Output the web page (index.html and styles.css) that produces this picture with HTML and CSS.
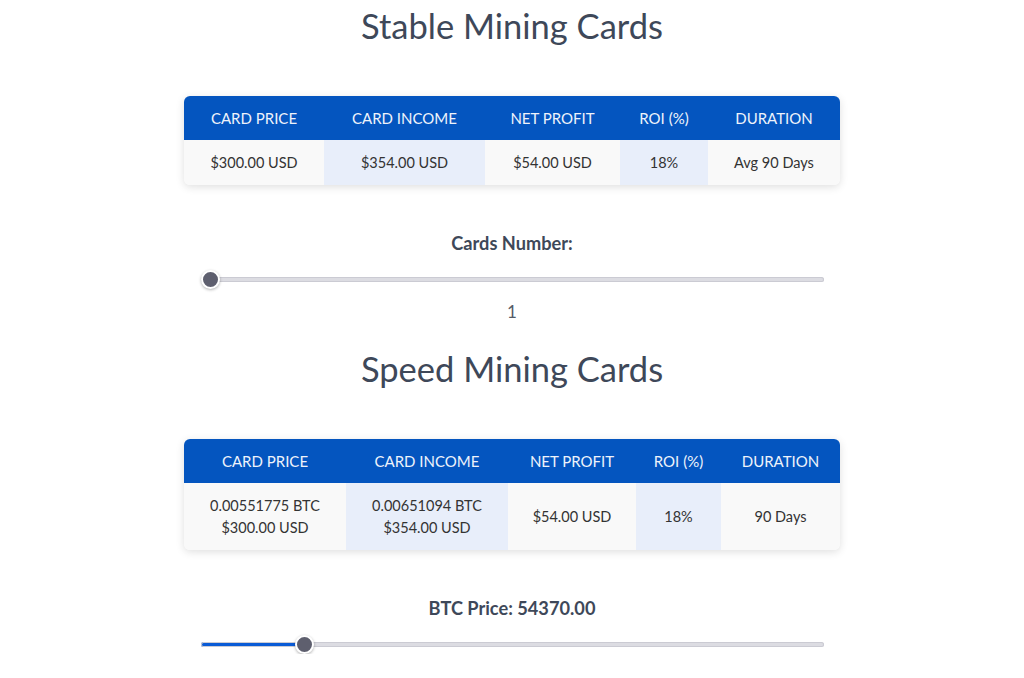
FILE: index.html
```
<!doctype html>
<html lang="en">
    <head>
        <meta charset="UTF-8" />
        <meta name="viewport" content="width=device-width, initial-scale=1.0" />
        <title>Mining Cards</title>
        <link rel="stylesheet" href="styles.css">
    </head>
    <body>
        <div class="container">
            <h2 class="title">Stable Mining Cards</h2>

            <div class="card-table">
                <table class="stable">
                    <thead>
                        <tr>
                            <th>Card Price</th>
                            <th>Card Income</th>
                            <th>Net Profit</th>
                            <th>ROI (%)</th>
                            <th>Duration</th>
                        </tr>
                    </thead>
                    <tbody>
                        <tr>
                            <td>$300.00 USD</td>
                            <td class="tint">$354.00 USD</td>
                            <td>$54.00 USD</td>
                            <td class="tint">18%</td>
                            <td>Avg 90 Days</td>
                        </tr>
                    </tbody>
                </table>
            </div>

            <div class="calc">
                <label class="calc-label" for="cardsNumber">Cards Number:</label>
                <input type="range" class="slider" id="cardsNumber" min="1" max="100" value="1">
                <p class="calc-value" id="cardsValue">1</p>
            </div>

            <h2 class="title">Speed Mining Cards</h2>

            <div class="card-table">
                <table class="speed">
                    <thead>
                        <tr>
                            <th>Card Price</th>
                            <th>Card Income</th>
                            <th>Net Profit</th>
                            <th>ROI (%)</th>
                            <th>Duration</th>
                        </tr>
                    </thead>
                    <tbody>
                        <tr>
                            <td>0.00551775 BTC<br>$300.00 USD</td>
                            <td class="tint">0.00651094 BTC<br>$354.00 USD</td>
                            <td>$54.00 USD</td>
                            <td class="tint">18%</td>
                            <td>90 Days</td>
                        </tr>
                    </tbody>
                </table>
            </div>

            <div class="calc">
                <label class="calc-label" for="btcPrice">BTC Price: <span id="btcValue">54370.00</span></label>
                <input type="range" class="slider fill" id="btcPrice" min="30000" max="186000" value="54370" style="--fill: 16.4%">
            </div>
        </div>
    </body>
</html>
```

FILE: styles.css
```
body {
    font-family: Lato, "Open Sans", Arial, sans-serif;
    margin: 0;
    background-color: #fff;
    color: #3e4859;
}
.container {
    width: 656px;
    margin: 0 auto;
    padding-top: 8px;
}
.title {
    margin: 0 0 52px;
    font-size: 34.5px;
    line-height: 36px;
    font-weight: 400;
    text-align: center;
    color: #3e4859;
}
.card-table {
    border-radius: 6px;
    overflow: hidden;
    box-shadow: 0 2px 8px rgba(0, 0, 0, 0.13);
}
table {
    width: 100%;
    border-collapse: collapse;
    text-align: center;
}
th {
    box-sizing: border-box;
    height: 44px;
    padding: 0 8px;
    background-color: #0455bf;
    color: #eef3fb;
    font-size: 15px;
    font-weight: 400;
    text-transform: uppercase;
}
td {
    padding: 0 8px;
    background-color: #f9f9f9;
    color: #333;
    font-size: 14.5px;
    line-height: 22px;
}
td.tint {
    background-color: #e8eefa;
}
.stable td {
    height: 45px;
}
.stable th:nth-child(1) { width: 140px; }
.stable th:nth-child(2) { width: 161px; }
.stable th:nth-child(3) { width: 135px; }
.stable th:nth-child(4) { width: 88px; }
.speed td {
    height: 67px;
}
.speed th:nth-child(1) { width: 162px; }
.speed th:nth-child(2) { width: 162px; }
.speed th:nth-child(3) { width: 128px; }
.speed th:nth-child(4) { width: 85px; }
.calc {
    display: flex;
    flex-direction: column;
    align-items: center;
    margin-top: 46px;
}
.calc-label {
    font-size: 18.2px;
    line-height: 24px;
    font-weight: 700;
    color: #3e4859;
}
.calc-value {
    margin: 11px 0 27px;
    font-size: 17px;
    line-height: 24px;
    color: #555b66;
}
.slider {
    -webkit-appearance: none;
    appearance: none;
    width: 623px;
    height: 20px;
    margin: 14px 0 0;
    background: transparent;
}
.slider::-webkit-slider-runnable-track {
    height: 5px;
    border-radius: 3px;
    background: #dcdce2;
    box-shadow: inset 0 0 0 1px #cbcbd3;
}
.slider.fill::-webkit-slider-runnable-track {
    background: linear-gradient(to right, #0a5bd6 var(--fill), #dcdce2 var(--fill));
}
.slider::-webkit-slider-thumb {
    -webkit-appearance: none;
    width: 19px;
    height: 19px;
    margin-top: -7px;
    border-radius: 50%;
    background: #5e5f6e;
    border: 2px solid #fff;
    box-shadow: 0 1px 3px rgba(0, 0, 0, 0.3);
}
```
